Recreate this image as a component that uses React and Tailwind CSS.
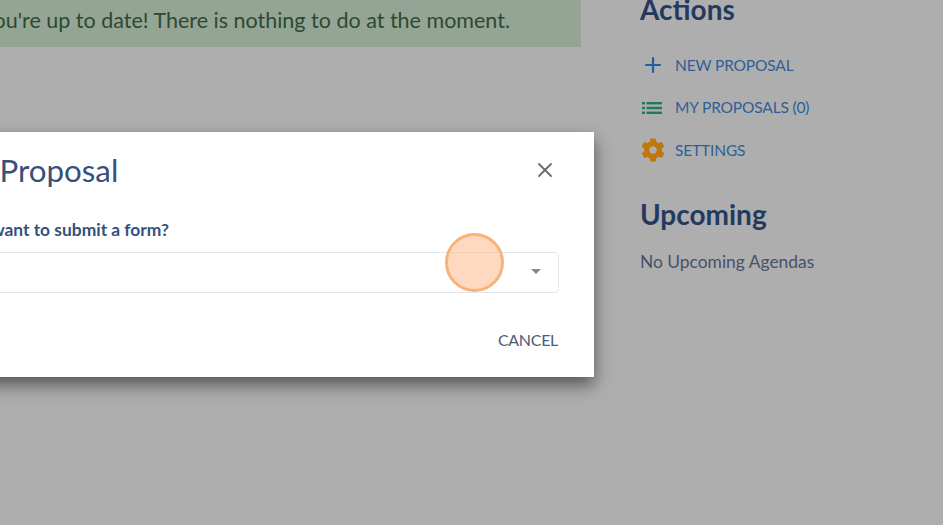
import React from "react";
import { Plus, X } from "lucide-react";

function ListIcon() {
  return (
    <svg width="22" height="14" viewBox="0 0 22 14" fill="#1f7a5c">
      <rect x="1" y="1" width="3" height="2.4" />
      <rect x="1" y="5.8" width="3" height="2.4" />
      <rect x="1" y="10.6" width="3" height="2.4" />
      <rect x="5.5" y="1" width="15.5" height="2.4" />
      <rect x="5.5" y="5.8" width="15.5" height="2.4" />
      <rect x="5.5" y="10.6" width="15.5" height="2.4" />
    </svg>
  );
}

function GearIcon() {
  return (
    <svg width="24" height="24" viewBox="0 0 512 512" fill="#c1770f">
      <path d="M487.4 315.7l-42.6-24.6c4.3-23.2 4.3-47 0-70.2l42.6-24.6c4.9-2.8 7.1-8.6 5.5-14-11.1-35.6-30-67.8-54.7-94.6-3.8-4.1-10-5.1-14.8-2.3L380.8 110c-17.9-15.4-38.5-27.3-60.8-35.1V25.8c0-5.6-3.9-10.5-9.4-11.7-36.7-8.2-74.3-7.8-109.2 0-5.5 1.2-9.4 6.1-9.4 11.7V75c-22.2 7.9-42.8 19.8-60.8 35.1L88.7 85.5c-4.9-2.8-11-1.9-14.8 2.3-24.7 26.7-43.6 58.9-54.7 94.6-1.7 5.4.6 11.2 5.5 14L67.3 221c-4.3 23.2-4.3 47 0 70.2l-42.6 24.6c-4.9 2.8-7.1 8.6-5.5 14 11.1 35.6 30 67.8 54.7 94.6 3.8 4.1 10 5.1 14.8 2.3l42.6-24.6c17.9 15.4 38.5 27.3 60.8 35.1v49.2c0 5.6 3.9 10.5 9.4 11.7 36.7 8.2 74.3 7.8 109.2 0 5.5-1.2 9.4-6.1 9.4-11.7v-49.2c22.2-7.9 42.8-19.8 60.8-35.1l42.6 24.6c4.9 2.8 11 1.9 14.8-2.3 24.7-26.7 43.6-58.9 54.7-94.6 1.5-5.5-.7-11.3-5.6-14.1zM256 336c-44.1 0-80-35.9-80-80s35.9-80 80-80 80 35.9 80 80-35.9 80-80 80z" />
    </svg>
  );
}

function ActionRow({ icon, label }) {
  return (
    <div className="flex items-center h-[42.5px]">
      <div className="w-[35px] flex justify-start items-center pl-px">{icon}</div>
      <span className="text-[15.5px] text-[#2f5f96] tracking-[-0.15px]">{label}</span>
    </div>
  );
}

export default function App() {
  return (
    <div className="relative w-[943px] h-[525px] overflow-hidden bg-[#aeaeae] font-['Lato','Liberation_Sans',sans-serif]">
      <div className="flex items-start">
        <div className="w-[581px] h-[47px] bg-[#94a495] flex justify-end items-center pr-[71px] pb-[7px] shrink-0">
          <span className="text-[21.5px] text-[#2c4a2f] whitespace-nowrap">You're up to date! There is nothing to do at the moment.</span>
        </div>
        <div className="ml-[59px] -mt-[9px]">
          <h2 className="text-[28px] leading-[36px] font-bold text-[#233a5e]">Actions</h2>
          <div className="mt-[17px]">
            <ActionRow icon={<Plus size={24} color="#1f5fa8" strokeWidth={2.2} />} label="NEW PROPOSAL" />
            <ActionRow icon={<ListIcon />} label="MY PROPOSALS (0)" />
            <ActionRow icon={<GearIcon />} label="SETTINGS" />
          </div>
          <h2 className="text-[28px] leading-[36px] font-bold text-[#233a5e] mt-[24px]">Upcoming</h2>
          <p className="text-[17.4px] leading-[24px] text-[#45526a] mt-[18px]">No Upcoming Agendas</p>
        </div>
      </div>

      <div className="absolute left-[-300px] top-[132px] w-[894px] h-[245px] bg-white shadow-[0_8px_16px_rgba(0,0,0,0.5)] pr-[35px]">
        <div className="flex justify-end items-center h-[76px] relative pr-[2px]">
          <span className="absolute left-[299.5px] top-[18px] text-[31.3px] leading-[40px] text-[#37507a]">Proposal</span>
          <X size={24} color="#6b6b6b" strokeWidth={1.8} className="mt-[-1px]" />
        </div>
        <div className="relative h-[22px] mt-[11px]">
          <span className="absolute right-[390px] top-0 text-[17.4px] leading-[22px] font-bold text-[#37507a] whitespace-nowrap">want to submit a form?</span>
        </div>
        <div className="mt-[11px] h-[41px] ml-[100px] border border-[#e4e6ea] rounded-[4px] flex items-center justify-end pr-[17px]">
          <div className="w-0 h-0 mt-[-2px] border-l-[5px] border-r-[5px] border-t-[5px] border-l-transparent border-r-transparent border-t-[#8a8a8a]" />
        </div>
        <div className="flex justify-end mt-[35px] pr-px">
          <span className="text-[16px] leading-[24px] text-[#4b5c78] tracking-[-0.3px]">CANCEL</span>
        </div>
      </div>

      <div className="absolute left-[445px] top-[233px] w-[59px] h-[59px] rounded-full bg-[#fdba8c]/55 border-[3px] border-[#fab27b]" />
    </div>
  );
}
